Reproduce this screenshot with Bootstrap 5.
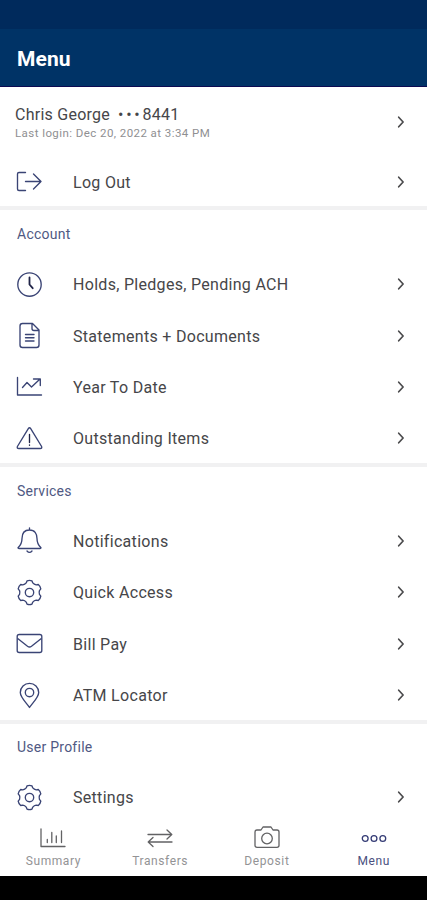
<!DOCTYPE html>
<html lang="en">
<head>
<meta charset="utf-8">
<meta name="viewport" content="width=device-width, initial-scale=1">
<title>Menu</title>
<link href="https://cdn.jsdelivr.net/npm/bootstrap@5.3.0/dist/css/bootstrap.min.css" rel="stylesheet">
<style>
body{font-family:Roboto,"Liberation Sans",sans-serif;color:#464649;height:900px;overflow:hidden;line-height:1.2}
.status{height:29px;background:#002a5c}
.topbar{height:58px;background:#036;border-bottom:1px solid #0c0a52;padding:4px 17px 0}
.topbar h1{font-size:21px;font-weight:700;line-height:1;letter-spacing:.1px}
.account{height:69px;padding:0 16px 0 15px}
.account-name{font-size:16px;letter-spacing:.25px;line-height:18px}
.last-login{font-size:11.5px;color:#8f8f92;letter-spacing:.43px;line-height:18px}
.dots{letter-spacing:2.8px;margin:0 0 0 -.5px}
.menu-row{height:51.4px;padding:0 17px 0 16px}
.label{font-size:16px;letter-spacing:.3px;margin-left:30px;padding-top:1.2px}
.section{border-top:4px solid #f1f1f2;margin-top:-1px}
.section h2{font-size:14px;font-weight:400;color:#505983;height:48.1px;padding-left:17px;letter-spacing:.25px}
svg{fill:none;stroke-linecap:round;stroke-linejoin:round;flex:none;display:block}
.ico{width:27px;height:27px;stroke:#3a4475;stroke-width:1.35}
.chev{width:20px;height:20px;stroke:#4b4b4d;stroke-width:1.7}
.account .chev{margin-right:1px}
.tabs{height:54px}
.tab{font-size:12px;color:#939395;letter-spacing:.6px;width:25%}
.tab span{margin-top:6px}
.tab svg{width:28px;height:26px;stroke:#626264;stroke-width:1.3}
.tab.current{color:#4a5080}
.tab.current svg{stroke:#343b75}
.system{height:24px}
</style>
</head>
<body class="bg-white d-flex flex-column">
<svg width="0" height="0" class="d-none">
  <symbol id="chev" viewBox="0 0 20 20"><path d="M8.7 5.2l4.4 4.8-4.4 4.8"/></symbol>
  <symbol id="gear" viewBox="-13.5 -13.5 27 27"><path d="M-2.5-11.6Q0-12.6 2.5-11.6L3.3-9.6Q4.65-8.05 6.66-7.66L8.8-8Q10.9-6.3 11.3-3.7L9.96-1.94Q9.3 0 9.96 1.94L11.3 3.7Q10.9 6.3 8.8 8L6.66 7.66Q4.65 8.05 3.3 9.6L2.5 11.6Q0 12.6-2.5 11.6L-3.3 9.6Q-4.65 8.05-6.66 7.66L-8.8 8Q-10.9 6.3-11.3 3.7L-9.96 1.94Q-9.3 0-9.96-1.94L-11.3-3.7Q-10.9-6.3-8.8-8L-6.66-7.66Q-4.65-8.05-3.3-9.6Z"/><circle r="4.2"/></symbol>
</svg>
<div class="status flex-shrink-0"></div>
<header class="topbar flex-shrink-0 d-flex align-items-center text-white"><h1 class="m-0">Menu</h1></header>
<main class="flex-grow-1 overflow-hidden">
  <div class="account d-flex align-items-center justify-content-between">
    <div class="pt-1"><div class="account-name">Chris George &nbsp;<span class="dots">•••</span>8441</div><div class="last-login">Last login: Dec 20, 2022 at 3:34 PM</div></div>
    <svg class="chev"><use href="#chev"/></svg>
  </div>
  <div class="menu-row d-flex align-items-center">
    <svg class="ico" viewBox="0 0 27 27"><path d="M9.5 4.5H3Q1.5 4.5 1.5 6V21Q1.5 22.5 3 22.5H9.5M9.5 13.5H25M17.5 6L25 13.5 17.5 21"/></svg>
    <span class="label flex-grow-1">Log Out</span><svg class="chev"><use href="#chev"/></svg>
  </div>
  <section class="section">
    <h2 class="m-0 d-flex align-items-center">Account</h2>
    <div class="menu-row d-flex align-items-center">
      <svg class="ico" viewBox="0 0 27 27"><circle cx="13.5" cy="13.5" r="11.7"/><path stroke="#202447" stroke-width="1.8" d="M13.5 6.5V13.5L16.7 17.2"/></svg>
      <span class="label flex-grow-1">Holds, Pledges, Pending ACH</span><svg class="chev"><use href="#chev"/></svg>
    </div>
    <div class="menu-row d-flex align-items-center">
      <svg class="ico" viewBox="0 0 27 27"><path d="M6.5 1.5H16.5L23 8V23Q23 25.5 20.5 25.5H6.5Q4 25.5 4 23V4Q4 1.5 6.5 1.5ZM16 2V6.5Q16 8.5 18 8.5H22.5M9.5 12.5H18M9.5 15.7H18M9.5 19H18"/></svg>
      <span class="label flex-grow-1">Statements + Documents</span><svg class="chev"><use href="#chev"/></svg>
    </div>
    <div class="menu-row d-flex align-items-center">
      <svg class="ico" viewBox="0 0 27 27"><path d="M1.5 4.5V22H25.5M6.5 14.5L11 9.5 15.5 14 23.5 6.5M17.5 6H24.3V12.5"/></svg>
      <span class="label flex-grow-1">Year To Date</span><svg class="chev"><use href="#chev"/></svg>
    </div>
    <div class="menu-row d-flex align-items-center">
      <svg class="ico" viewBox="0 0 27 27"><path d="M12.3 3.6Q13.5 1.8 14.7 3.6L25.6 21.5Q26.3 23.5 24.2 23.5H2.8Q.7 23.5 1.4 21.5Z"/><path stroke="#202447" d="M13.5 9.5V17.5M13.5 20V20.3"/></svg>
      <span class="label flex-grow-1">Outstanding Items</span><svg class="chev"><use href="#chev"/></svg>
    </div>
  </section>
  <section class="section">
    <h2 class="m-0 d-flex align-items-center">Services</h2>
    <div class="menu-row d-flex align-items-center">
      <svg class="ico" viewBox="0 0 27 27"><path d="M13.5 1V3M13.5 3C8 3 6 7 6 11.5C6 17 4 19 2 20.8Q2 21.5 3 21.5H24Q25 21.5 25 20.8C23 19 21 17 21 11.5C21 7 19 3 13.5 3ZM11 24Q13.5 26.8 16 24"/></svg>
      <span class="label flex-grow-1">Notifications</span><svg class="chev"><use href="#chev"/></svg>
    </div>
    <div class="menu-row d-flex align-items-center">
      <svg class="ico"><use href="#gear"/></svg>
      <span class="label flex-grow-1">Quick Access</span><svg class="chev"><use href="#chev"/></svg>
    </div>
    <div class="menu-row d-flex align-items-center">
      <svg class="ico" viewBox="0 0 27 27"><rect x="1.2" y="4.5" width="24.6" height="18" rx="2"/><path d="M2 8.7L11.5 16.2Q13.5 17.7 15.5 16.2L25 8.7"/></svg>
      <span class="label flex-grow-1">Bill Pay</span><svg class="chev"><use href="#chev"/></svg>
    </div>
    <div class="menu-row d-flex align-items-center">
      <svg class="ico" viewBox="0 0 27 27"><path d="M13.5 25.5C11 21.5 4.3 15.5 4.3 10.5A9.2 9.2 0 0 1 22.7 10.5C22.7 15.5 16 21.5 13.5 25.5Z"/><circle cx="13.5" cy="10.5" r="4.2"/></svg>
      <span class="label flex-grow-1">ATM Locator</span><svg class="chev"><use href="#chev"/></svg>
    </div>
  </section>
  <section class="section">
    <h2 class="m-0 d-flex align-items-center">User Profile</h2>
    <div class="menu-row d-flex align-items-center">
      <svg class="ico"><use href="#gear"/></svg>
      <span class="label flex-grow-1">Settings</span><svg class="chev"><use href="#chev"/></svg>
    </div>
  </section>
</main>
<nav class="tabs bg-white flex-shrink-0 d-flex">
  <div class="tab d-flex flex-column align-items-center"><svg viewBox="0 0 28 26"><path d="M2 7V24.5H26M8.3 20.5V17.5M12.8 20.5V10.5M17.3 20.5V14M22.5 20.5V9"/></svg><span>Summary</span></div>
  <div class="tab d-flex flex-column align-items-center"><svg viewBox="0 0 28 26"><path d="M2 12.5H25.5M21 8L25.8 12.5 21 17M26 20H2.5M7 15.5L2.2 20 7 24.5"/></svg><span>Transfers</span></div>
  <div class="tab d-flex flex-column align-items-center"><svg viewBox="0 0 28 26"><path d="M4 8H8L10 5H18L20 8H24Q26 8 26 10V23.5Q26 25.3 24 25.3H4Q2 25.3 2 23.5V10Q2 8 4 8Z"/><circle cx="14" cy="16.5" r="5.3"/></svg><span>Deposit</span></div>
  <div class="tab current d-flex flex-column align-items-center"><svg viewBox="0 0 28 26"><circle cx="5.2" cy="16.5" r="2.9"/><circle cx="14" cy="16.5" r="2.9"/><circle cx="22.8" cy="16.5" r="2.9"/></svg><span>Menu</span></div>
</nav>
<div class="system bg-black flex-shrink-0"></div>
<script src="https://cdn.jsdelivr.net/npm/bootstrap@5.3.0/dist/js/bootstrap.bundle.min.js"></script>
</body>
</html>
